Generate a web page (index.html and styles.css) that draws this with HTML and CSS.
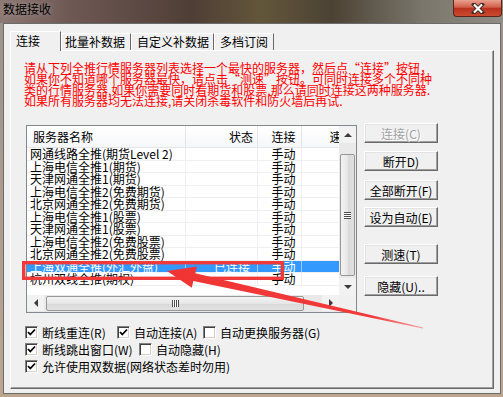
FILE: index.html
```html
<!doctype html>
<html lang="zh-CN">
  <head>
    <meta charset="UTF-8" />
    <title>数据接收</title>
    <link rel="stylesheet" href="styles.css">
  </head>
  <body>
    <!-- 标题栏 -->
    <div class="titlebar">
      <span class="title">数据接收</span>
      <span class="close">
        <svg width="14" height="11" viewBox="0 0 14 11">
          <path d="M3 1.5 L11 9.5 M11 1.5 L3 9.5" stroke="#3a2a28" stroke-width="4" stroke-linecap="square" fill="none"/>
          <path d="M3 1.5 L11 9.5 M11 1.5 L3 9.5" stroke="#fff" stroke-width="2.2" fill="none"/>
        </svg>
      </span>
    </div>

    <div class="dialog">
      <div class="tabs">
        <div class="tab active">连接</div>
        <div class="tab t-batch">批量补数据</div>
        <div class="tab t-custom">自定义补数据</div>
        <div class="tab t-sub">多档订阅</div>
      </div>

      <div class="panel">
        <p class="note">请从下列全推行情服务器列表选择一个最快的服务器，然后点“连接”按钮，<br>如果你不知道哪个服务器最快，请点击“测速”按钮。可同时连接多个不同种<br>类的行情服务器,如果你需要同时看期货和股票,那么请同时连接这两种服务器.<br>如果所有服务器均无法连接,请关闭杀毒软件和防火墙后再试.</p>

        <div class="main">
          <!-- 服务器列表 -->
          <div class="listview">
            <div class="view">
              <div class="lv-row lv-head">
                <span class="c name">服务器名称</span><span class="c state">状态</span><span class="c mode">连接</span><span class="c speed">速度</span>
              </div>
              <div class="lv-row"><span class="c name">网通线路全推(期货Level 2)</span><span class="c state"></span><span class="c mode">手动</span><span class="c speed"></span></div>
              <div class="lv-row"><span class="c name">上海电信全推1(期货)</span><span class="c state"></span><span class="c mode">手动</span><span class="c speed"></span></div>
              <div class="lv-row"><span class="c name">天津网通全推1(期货)</span><span class="c state"></span><span class="c mode">手动</span><span class="c speed"></span></div>
              <div class="lv-row"><span class="c name">上海电信全推2(免费期货)</span><span class="c state"></span><span class="c mode">手动</span><span class="c speed"></span></div>
              <div class="lv-row"><span class="c name">北京网通全推2(免费期货)</span><span class="c state"></span><span class="c mode">手动</span><span class="c speed"></span></div>
              <div class="lv-row"><span class="c name">上海电信全推1(股票)</span><span class="c state"></span><span class="c mode">手动</span><span class="c speed"></span></div>
              <div class="lv-row"><span class="c name">天津网通全推1(股票)</span><span class="c state"></span><span class="c mode">手动</span><span class="c speed"></span></div>
              <div class="lv-row"><span class="c name">上海电信全推2(免费股票)</span><span class="c state"></span><span class="c mode">手动</span><span class="c speed"></span></div>
              <div class="lv-row"><span class="c name">北京网通全推2(免费股票)</span><span class="c state"></span><span class="c mode">手动</span><span class="c speed"></span></div>
              <div class="lv-row selected"><span class="c name">上海双通全推(外汇外盘)</span><span class="c state">已连接</span><span class="c mode">手动</span><span class="c speed"></span></div>
              <div class="lv-row"><span class="c name">杭州双线全推(期权)</span><span class="c state"></span><span class="c mode">手动</span><span class="c speed"></span></div>
            </div>
            <div class="vscroll">
              <span class="sb-btn"><i class="arr up"></i></span>
              <span class="sb-track"></span>
              <span class="thumb v"><i class="grip"></i></span>
              <span class="sb-gap"></span>
              <span class="sb-btn"><i class="arr down"></i></span>
            </div>
            <div class="hscroll">
              <span class="sb-btn"><i class="arr left"></i></span>
              <span class="thumb h"><i class="grip"></i></span>
              <span class="sb-track"></span>
              <span class="sb-btn"><i class="arr right"></i></span>
            </div>
            <div class="corner"></div>
          </div>

          <!-- 操作按钮 -->
          <div class="btns">
            <button class="btn" disabled>连接(C)</button>
            <button class="btn">断开D)</button>
            <button class="btn gap-9">全部断开(F)</button>
            <button class="btn gap-7">设为自动(E)</button>
            <button class="btn gap-17">测速(T)</button>
            <button class="btn gap-12">隐藏(U)..</button>
          </div>
        </div>

        <!-- 选项 -->
        <div class="checks">
          <div class="check-row">
            <label class="opt w92"><span class="cb on"><svg width="9" height="9" viewBox="0 0 9 9"><path d="M1 4 L3.3 6.5 L8 1.5" stroke="#000" stroke-width="1.8" fill="none"/></svg></span>断线重连(R)</label>
            <label class="opt w86"><span class="cb on"><svg width="9" height="9" viewBox="0 0 9 9"><path d="M1 4 L3.3 6.5 L8 1.5" stroke="#000" stroke-width="1.8" fill="none"/></svg></span>自动连接(A)</label>
            <label class="opt"><span class="cb"></span>自动更换服务器(G)</label>
          </div>
          <div class="check-row">
            <label class="opt w114"><span class="cb on"><svg width="9" height="9" viewBox="0 0 9 9"><path d="M1 4 L3.3 6.5 L8 1.5" stroke="#000" stroke-width="1.8" fill="none"/></svg></span>断线跳出窗口(W)</label>
            <label class="opt"><span class="cb"></span>自动隐藏(H)</label>
          </div>
          <div class="check-row">
            <label class="opt"><span class="cb on"><svg width="9" height="9" viewBox="0 0 9 9"><path d="M1 4 L3.3 6.5 L8 1.5" stroke="#000" stroke-width="1.8" fill="none"/></svg></span>允许使用双数据(网络状态差时勿用)</label>
          </div>
        </div>
      </div>
    </div>

    <!-- 红色标注 -->
    <svg class="annot" width="503" height="397" viewBox="0 0 503 397">
      <defs>
        <linearGradient id="fade" gradientUnits="userSpaceOnUse" x1="167" y1="271" x2="423" y2="328">
          <stop offset="0" stop-color="#f03434"/>
          <stop offset="0.8" stop-color="#f23a3a"/>
          <stop offset="1" stop-color="#f6a0a0"/>
        </linearGradient>
      </defs>
      <rect x="23.7" y="262.7" width="258.6" height="15.6" fill="none" stroke="#f03a3a" stroke-width="3.4"/>
      <polygon points="167,271 197,266.5 195.3,273.2 423.1,327.4 422.9,328.6 193.3,281 191.8,287.7" fill="url(#fade)"/>
    </svg>
  </body>
</html>
```

FILE: styles.css
```css
* {
  margin: 0;
  padding: 0;
  box-sizing: border-box;
}
body {
  width: 503px;
  height: 397px;
  overflow: hidden;
  position: relative;
  background: linear-gradient(#9a928c, #bca690);
  font-family: "Noto Sans CJK SC", sans-serif;
  font-size: 12px;
  color: #000;
}

/* 标题栏 */
.titlebar {
  height: 23px;
  display: flex;
  align-items: flex-start;
  background: linear-gradient(90deg, #8c7874 0%, #6e5854 14%, #4f3e36 38%, #62563a 52%, #4c4234 66%, #7a766c 84%, #8f8d85 100%);
}
.title {
  padding-left: 3px;
  line-height: 18px;
  text-shadow: 0 0 6px rgba(255, 255, 255, 0.35);
}
.close {
  margin-left: auto;
  margin-right: 1px;
  width: 49px;
  height: 17px;
  border: 1px solid #5a2418;
  border-top: none;
  border-radius: 0 0 4px 4px;
  background: linear-gradient(#e9a08e, #d2604a 45%, #b8321e 52%, #cc4a30);
  display: flex;
  align-items: center;
  justify-content: center;
}

/* 对话框 */
.dialog {
  margin: 0 2px 0 3px;
  height: 371px;
  border: 1px solid #6b6b6b;
  background: #f0f0f0;
  padding: 7px 6px 0 6px;
}
.tabs {
  display: flex;
  align-items: flex-end;
  height: 19px;
}
.tab {
  height: 17px;
  line-height: 15px;
  padding-left: 3px;
  border: 1px solid;
  border-color: #fff #696969 transparent #fff;
  border-bottom: none;
  background: #f0f0f0;
}
.tab.active {
  width: 51px;
  height: 20px;
  line-height: 17px;
  padding-left: 5px;
  margin-bottom: -1px;
  position: relative;
  z-index: 1;
}
.t-batch { width: 70px; }
.t-custom { width: 83px; padding-left: 5px; }
.t-sub { width: 60px; padding-left: 5px; }

.panel {
  height: 339px;
  border: 1px solid;
  border-color: #fff #696969 #696969 #fff;
  box-shadow: inset -1px -1px #a0a0a0;
}
.note {
  padding: 11px 0 0 13px;
  color: #ff0000;
  font-size: 12px;
  line-height: 11px;
  white-space: nowrap;
}

.main {
  display: flex;
  align-items: flex-start;
  margin: 17px 0 0 15px;
}

/* 列表 */
.listview {
  display: grid;
  grid-template-columns: 312px 17px;
  grid-template-rows: 169px 17px;
  width: 331px;
  height: 188px;
  margin-top: 2px;
  border: 1px solid #828790;
  background: #fff;
}
.view {
  overflow: hidden;
}
.lv-row {
  display: flex;
  height: 12.5px;
  line-height: 12px;
  white-space: nowrap;
  border-bottom: 1px solid #f0f0f0;
}
.c {
  flex: none;
  border-right: 1px solid #f0f0f0;
}
.name { width: 159px; padding-left: 3px; }
.state { width: 72px; text-align: right; padding-right: 7px; }
.mode { width: 44px; text-align: center; padding-left: 8px; }
.speed { width: 80px; text-align: center; }
.lv-head {
  height: 22px;
  line-height: 21px;
  background: linear-gradient(#fff, #f6f7f9);
  border-bottom: 1px solid #e3e5e8;
}
.lv-head .c {
  border-right-color: #e3e5e8;
}
.lv-head .name { padding-left: 6px; }
.lv-head .state { padding-right: 4px; }
.selected {
  background: #3399ff;
  color: #fff;
}
.selected .c {
  border-right-color: #9ccbff;
}

/* 滚动条 */
.vscroll,
.hscroll {
  display: flex;
  background: #e9e9e9;
}
.vscroll { flex-direction: column; }
.sb-btn {
  flex: none;
  width: 17px;
  height: 17px;
  display: flex;
  align-items: center;
  justify-content: center;
  background: #f2f2f2;
}
.sb-track { flex: 1; }
.vscroll .sb-track { flex: none; height: 11px; }
.sb-gap { flex: 1; }
.hscroll .sb-btn { height: 16px; }
.thumb {
  flex: none;
  display: flex;
  align-items: center;
  justify-content: center;
  border: 1px solid #979797;
  border-radius: 2px;
}
.thumb.v {
  height: 122px;
  margin: 0 1px;
  background: linear-gradient(90deg, #f3f3f3, #e6e6e6 50%, #d9d9d9 51%, #e0e0e0);
}
.thumb.h {
  width: 258px;
  margin: 1px 0 1px 2px;
  background: linear-gradient(#f3f3f3, #e6e6e6 50%, #d9d9d9 51%, #e0e0e0);
}
.grip {
  display: block;
}
.v .grip {
  width: 7px;
  height: 7px;
  background: repeating-linear-gradient(#4a4a4a 0 1px, #fff 1px 2px);
}
.h .grip {
  width: 7px;
  height: 7px;
  background: repeating-linear-gradient(90deg, #4a4a4a 0 1px, #fff 1px 2px);
}
.arr {
  width: 0;
  height: 0;
  border: 4px solid transparent;
}
.arr.up { border-bottom-color: #3c3c3c; border-top-width: 0; }
.arr.down { border-top-color: #3c3c3c; border-bottom-width: 0; }
.arr.left { border-right-color: #3c3c3c; border-left-width: 0; }
.arr.right { border-left-color: #3c3c3c; border-right-width: 0; }
.corner {
  background: #f0f0f0;
}

/* 按钮 */
.btns {
  display: flex;
  flex-direction: column;
  margin-left: 7px;
}
.btn {
  width: 74px;
  height: 20px;
  margin-top: 8px;
  font: inherit;
  line-height: 17px;
  color: #000;
  background: #f0f0f0;
  border: 1px solid;
  border-color: #fff #696969 #696969 #fff;
  box-shadow: inset -1px -1px #a0a0a0, inset 1px 1px #e3e3e3;
}
.btn:first-child { margin-top: 0; }
.btn:disabled {
  color: #a0a0a0;
  text-shadow: 1px 1px #fff;
}
.gap-7 { margin-top: 7px; }
.gap-9 { margin-top: 9px; }
.gap-12 { margin-top: 12px; }
.gap-17 { margin-top: 17px; }

/* 选项 */
.checks {
  margin: 11px 0 0 14px;
}
.check-row {
  display: flex;
  align-items: center;
  height: 17px;
}
.opt {
  display: flex;
  align-items: center;
  white-space: nowrap;
  line-height: 13px;
}
.w92 { width: 92px; }
.w86 { width: 86px; }
.w114 { width: 114px; }
.cb {
  width: 13px;
  height: 13px;
  margin-right: 4px;
  display: flex;
  align-items: center;
  justify-content: center;
  background: #fff;
  border: 1px solid;
  border-color: #808080 #fff #fff #808080;
  box-shadow: inset 1px 1px #404040, inset -1px -1px #d4d0c8;
}

/* 标注 */
.annot {
  position: absolute;
  left: 0;
  top: 0;
  pointer-events: none;
}
```
